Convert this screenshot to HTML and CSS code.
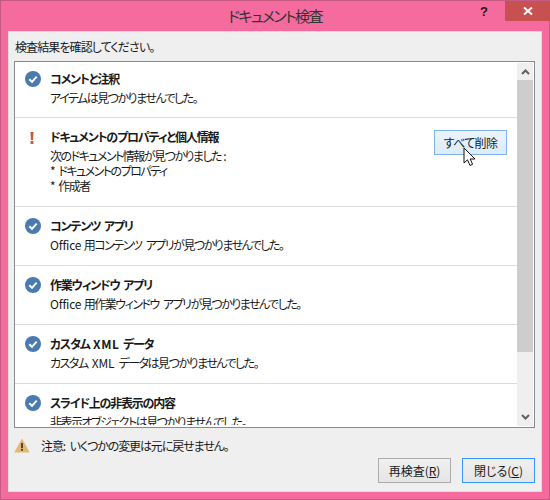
FILE: index.html
```html
<!DOCTYPE html>
<html lang="ja">
<head>
    <meta charset="UTF-8">
    <title>ドキュメント検査</title>
    <link rel="stylesheet" href="styles.css">
</head>
<body>
    <div class="window">
        <div class="titlebar">
            <div class="title">ドキュメント検査</div>
            <div class="help">?</div>
            <div class="close">
                <svg width="10" height="10" viewBox="0 0 10 10"><path d="M1 1.5L9 8.5M9 1.5L1 8.5" stroke="#fff" stroke-width="2" fill="none"/></svg>
            </div>
        </div>
        <div class="client">
            <div class="prompt">検査結果を確認してください。</div>
            <div class="listbox">
                <div class="list">
                    <div class="row row-first">
                        <svg class="icon" width="16" height="16" viewBox="0 0 16 16"><circle cx="8" cy="8" r="8" fill="#4a7bb0"/><path d="M4.3 8.3L7 10.8L11.7 5.6" stroke="#fff" stroke-width="2" fill="none"/></svg>
                        <div class="text">
                            <div class="heading">コメントと注釈</div>
                            <div>アイテムは見つかりませんでした。</div>
                        </div>
                    </div>
                    <div class="row row-found">
                        <svg class="icon" width="16" height="16" viewBox="0 0 16 16"><path d="M5.4 3H8.6L8 11H6Z" fill="#c9583a"/><rect x="5.6" y="12" width="2.8" height="3" fill="#c9583a"/></svg>
                        <div class="text">
                            <div class="heading">ドキュメントのプロパティと個人情報</div>
                            <div>次のドキュメント情報が見つかりました<span class="colon">:</span></div>
                            <div class="item item-first">* ドキュメントのプロパティ</div>
                            <div class="item">* 作成者</div>
                        </div>
                        <button class="btn btn-remove">すべて削除</button>
                        <svg class="cursor" width="14" height="21" viewBox="0 0 14 21"><path d="M1 1V16L4.5 12.8L7 18.5L9.6 17.3L7.2 12H12Z" fill="#fff" stroke="#111" stroke-width="1"/></svg>
                    </div>
                    <div class="row">
                        <svg class="icon" width="16" height="16" viewBox="0 0 16 16"><circle cx="8" cy="8" r="8" fill="#4a7bb0"/><path d="M4.3 8.3L7 10.8L11.7 5.6" stroke="#fff" stroke-width="2" fill="none"/></svg>
                        <div class="text">
                            <div class="heading">コンテンツ アプリ</div>
                            <div><span class="latin">Office </span>用コンテンツ アプリが見つかりませんでした。</div>
                        </div>
                    </div>
                    <div class="row">
                        <svg class="icon" width="16" height="16" viewBox="0 0 16 16"><circle cx="8" cy="8" r="8" fill="#4a7bb0"/><path d="M4.3 8.3L7 10.8L11.7 5.6" stroke="#fff" stroke-width="2" fill="none"/></svg>
                        <div class="text">
                            <div class="heading">作業ウィンドウ アプリ</div>
                            <div><span class="latin">Office </span>用作業ウィンドウ アプリが見つかりませんでした。</div>
                        </div>
                    </div>
                    <div class="row">
                        <svg class="icon" width="16" height="16" viewBox="0 0 16 16"><circle cx="8" cy="8" r="8" fill="#4a7bb0"/><path d="M4.3 8.3L7 10.8L11.7 5.6" stroke="#fff" stroke-width="2" fill="none"/></svg>
                        <div class="text">
                            <div class="heading">カスタム <span class="latin">XML</span> データ</div>
                            <div>カスタム <span class="latin">XML</span> データは見つかりませんでした。</div>
                        </div>
                    </div>
                    <div class="row row-last">
                        <svg class="icon" width="16" height="16" viewBox="0 0 16 16"><circle cx="8" cy="8" r="8" fill="#4a7bb0"/><path d="M4.3 8.3L7 10.8L11.7 5.6" stroke="#fff" stroke-width="2" fill="none"/></svg>
                        <div class="text">
                            <div class="heading">スライド上の非表示の内容</div>
                            <div>非表示オブジェクトは見つかりませんでした。</div>
                        </div>
                    </div>
                </div>
                <div class="scrollbar">
                    <div class="arrow">
                        <svg width="9" height="7" viewBox="0 0 9 7"><path d="M1 6L4.5 2.5L8 6" stroke="#606060" stroke-width="2" fill="none"/></svg>
                    </div>
                    <div class="thumb"></div>
                    <div class="track"></div>
                    <div class="arrow">
                        <svg width="9" height="7" viewBox="0 0 9 7"><path d="M1 1L4.5 4.5L8 1" stroke="#606060" stroke-width="2" fill="none"/></svg>
                    </div>
                </div>
            </div>
            <div class="warning">
                <svg width="16" height="15" viewBox="0 0 16 15"><path d="M8 0.5L15.8 14.5H0.2Z" fill="#e3b778"/><rect x="7.1" y="5" width="1.8" height="5.2" fill="#4a3c28"/><rect x="7.1" y="11" width="1.8" height="1.8" fill="#4a3c28"/></svg>
                <span>注意: いくつかの変更は元に戻せません。</span>
            </div>
            <div class="actions">
                <button class="btn">再検査(<u>R</u>)</button>
                <button class="btn btn-default">閉じる(<u>C</u>)</button>
            </div>
        </div>
    </div>
</body>
</html>
```

FILE: styles.css
```css
html, body {
    margin: 0;
    height: 100%;
}

body {
    font-family: "Noto Sans CJK JP", "Liberation Sans", sans-serif;
    font-size: 12px;
    font-feature-settings: "palt";
    color: #1a1a1a;
}

.window {
    box-sizing: border-box;
    width: 550px;
    height: 500px;
    display: flex;
    flex-direction: column;
    background: #f56b9d;
    border: 1px solid #c55b83;
    padding: 0 7px 7px;
}

.titlebar {
    height: 30px;
    flex: none;
    position: relative;
    margin-right: -7px;
    display: flex;
    justify-content: center;
}

.title {
    font-size: 15px;
    line-height: 30px;
    letter-spacing: -1.6px;
    color: #333;
    margin-right: 7px;
}

.help {
    position: absolute;
    top: 0;
    right: 61px;
    font-family: "Liberation Sans", sans-serif;
    font-weight: bold;
    font-size: 13px;
    line-height: 22px;
}

.close {
    position: absolute;
    top: 0;
    right: -1px;
    width: 45px;
    height: 20px;
    background: #c75050;
    display: flex;
    align-items: center;
    justify-content: center;
}

.client {
    flex: 1;
    min-height: 0;
    background: #efefef;
    border: 1px solid #dcdcdc;
    padding: 0 6px 8px 5px;
    display: flex;
    flex-direction: column;
}

.prompt {
    height: 29px;
    line-height: 29px;
    flex: none;
    padding-left: 1px;
    letter-spacing: -0.9px;
}

.listbox {
    height: 365px;
    flex: none;
    display: flex;
    background: #fff;
    border: 1px solid #8a8a96;
}

.list {
    flex: 1;
    min-width: 0;
    overflow: hidden;
    margin-bottom: 2px;
}

.row {
    position: relative;
    box-sizing: border-box;
    height: 59px;
    display: flex;
    align-items: flex-start;
    padding: 9px 10px 0 10px;
    border-bottom: 1px solid #dcdcdc;
    line-height: 19px;
}

.row-first {
    height: 56px;
    padding-top: 7px;
}

.row-found {
    height: 89px;
}

.item {
    line-height: 15px;
}

.item-first {
    margin-top: -2px;
}

.row-last {
    border-bottom: 0;
}

.icon {
    flex: none;
    margin: 2px 9px 0 0;
}

.text {
    flex: 1;
    letter-spacing: -1.5px;
    word-spacing: 3px;
}

.heading {
    font-weight: bold;
    letter-spacing: -1.2px;
    word-spacing: 2px;
}

.latin {
    letter-spacing: -0.2px;
    word-spacing: 0;
}

.colon {
    margin-left: 2px;
}

.heading .latin {
    letter-spacing: 0.6px;
}

.btn {
    width: 73px;
    height: 25px;
    padding: 0;
    font: inherit;
    color: inherit;
    background: linear-gradient(#f0f0f0, #e5e5e5);
    border: 1px solid #acacac;
}

.btn-default {
    border-color: #3399ff;
}

.btn-remove {
    flex: none;
    margin: 3px 0 0;
    letter-spacing: -0.6px;
    background: linear-gradient(#ebf4fc, #dcecfc);
    border-color: #7eb4ea;
}

.cursor {
    position: absolute;
    left: 448px;
    top: 29px;
}

.scrollbar {
    flex: none;
    width: 16px;
    margin: 1px 1px 1px 0;
    background: #efefef;
    display: flex;
    flex-direction: column;
}

.arrow {
    height: 17px;
    flex: none;
    display: flex;
    align-items: center;
    justify-content: center;
}

.thumb {
    height: 272px;
    flex: none;
    background: #cdcdcd;
}

.track {
    flex: 1;
}

.warning {
    box-sizing: border-box;
    display: flex;
    align-items: center;
    gap: 11px;
    height: 30px;
    padding-top: 4px;
    flex: none;
    letter-spacing: -1.1px;
    word-spacing: 3px;
}

.actions {
    flex: 1;
    display: flex;
    justify-content: flex-end;
    align-items: flex-start;
    gap: 11px;
}
```
